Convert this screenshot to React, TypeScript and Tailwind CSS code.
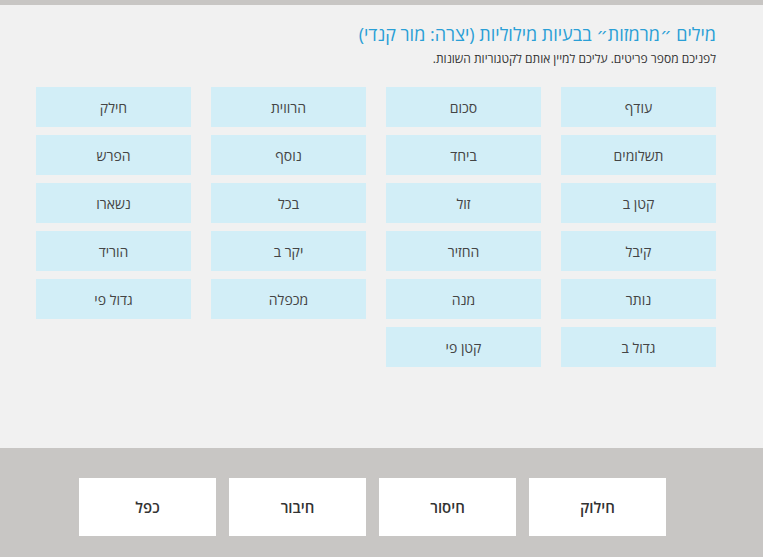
const columns: string[][] = [
  ['עודף', 'תשלומים', 'קטן ב', 'קיבל', 'נותר', 'גדול ב'],
  ['סכום', 'ביחד', 'זול', 'החזיר', 'מנה', 'קטן פי'],
  ['הרווית', 'נוסף', 'בכל', 'יקר ב', 'מכפלה'],
  ['חילק', 'הפרש', 'נשארו', 'הוריד', 'גדול פי'],
];

const categories = ['חילוק', 'חיסור', 'חיבור', 'כפל'];

export default function App() {
  return (
    <div
      dir="rtl"
      className="w-[763px] h-[557px] flex flex-col bg-[#f1f1f1] overflow-hidden"
      style={{ fontFamily: '"Open Sans", "DejaVu Sans", sans-serif' }}
    >
      {/* top strip */}
      <div className="h-[5px] bg-[#c8c6c4] shrink-0" />

      <div className="flex-1 pr-[47px] pl-[35px] pt-[17px]">
        <h1 className="text-[18px] leading-[24px] text-[#2a9fd6]">
          מילים ״מרמזות״ בבעיות מילוליות (יצרה: מור קנדי)
        </h1>
        <p className="text-[12px] leading-[17px] text-[#333] mt-[4px]">
          לפניכם מספר פריטים. עליכם למיין אותם לקטגוריות השונות.
        </p>

        <div className="flex gap-[20px] mt-[20px]">
          {columns.map((col, i) => (
            <div key={i} className="flex flex-col gap-[8px] w-[155px] shrink-0">
              {col.map(word => (
                <div
                  key={word}
                  className="h-[40px] bg-[#d2eef7] flex items-center justify-center text-[14px] text-[#444]"
                >
                  {word}
                </div>
              ))}
            </div>
          ))}
        </div>
      </div>

      {/* drop targets */}
      <div className="h-[109px] shrink-0 bg-[#c8c6c4] flex gap-[13px] pt-[30px] pr-[97px]">
        {categories.map(c => (
          <div
            key={c}
            className="w-[137px] h-[58px] bg-white flex items-center justify-center text-[15px] font-semibold text-[#333]"
          >
            {c}
          </div>
        ))}
      </div>
    </div>
  );
}
